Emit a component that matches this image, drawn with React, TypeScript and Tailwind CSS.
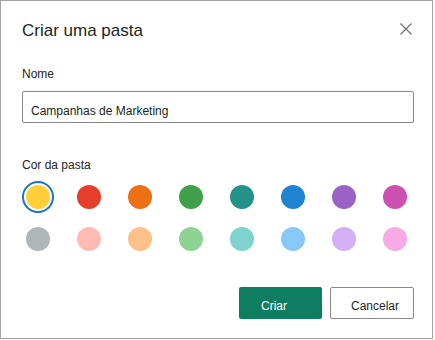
import React from "react";

const row1 = ["#FFCF3A", "#E73D2C", "#EE7014", "#3F9F4B", "#25928A", "#1E83D0", "#9A62C6", "#CA51B1"];
const row2 = ["#B0B6B8", "#FFBAB4", "#FFC08A", "#8ED294", "#7ED3CE", "#88C8F7", "#D5AFF4", "#F7AAE6"];

export default function App() {
  return (
    <div
      className="w-[433px] h-[339px] border border-[#a3a3a3] bg-white flex flex-col pt-[18px] pl-[21px] pr-[18px] text-[#201f1e]"
      style={{ fontFamily: '"Liberation Sans", Arial, sans-serif' }}
    >
      <div className="flex items-start justify-between">
        <div className="text-[17px] leading-[24px]">Criar uma pasta</div>
        <svg width="12" height="12" viewBox="0 0 12 12" className="mt-[4px] mr-[2px]">
          <path d="M0.5 0.5 L11.5 11.5 M11.5 0.5 L0.5 11.5" stroke="#6b6b6b" strokeWidth="1.1" fill="none" />
        </svg>
      </div>
      <div className="mt-[23px] text-[12px] leading-[16px] text-[#252423]">Nome</div>
      <div className="mt-[9px] h-8 border border-[#8a8886] rounded-[2px] pl-[8px] pt-[11px] text-[12px] leading-[16px] text-[#201f1e]">
        Campanhas de Marketing
      </div>
      <div className="mt-[34px] text-[12px] leading-[16px] text-[#252423]">Cor da pasta</div>
      <div className="mt-[8px] grid grid-cols-[repeat(8,32px)] gap-x-[19px] gap-y-[10px]">
        {row1.map((c, i) => (
          <div
            key={"a" + i}
            className={
              i === 0
                ? "w-8 h-8 rounded-full border-2 border-[#1673d1] flex items-center justify-center"
                : "w-8 h-8 flex items-center justify-center"
            }
          >
            <div className="w-6 h-6 rounded-full" style={{ backgroundColor: c }} />
          </div>
        ))}
        {row2.map((c, i) => (
          <div key={"b" + i} className="w-8 h-8 flex items-center justify-center">
            <div className="w-6 h-6 rounded-full" style={{ backgroundColor: c }} />
          </div>
        ))}
      </div>
      <div className="mt-[32px] flex justify-end gap-2">
        <div className="w-[83px] h-8 rounded-[2px] bg-[#0f7d60] text-white text-[12px] leading-[16px] pl-[22px] pt-[11px]">
          Criar
        </div>
        <div className="w-[84px] h-8 rounded-[2px] border border-[#8a8886] bg-white text-[#201f1e] text-[12px] leading-[16px] pl-[20px] pt-[10px]">
          Cancelar
        </div>
      </div>
    </div>
  );
}
